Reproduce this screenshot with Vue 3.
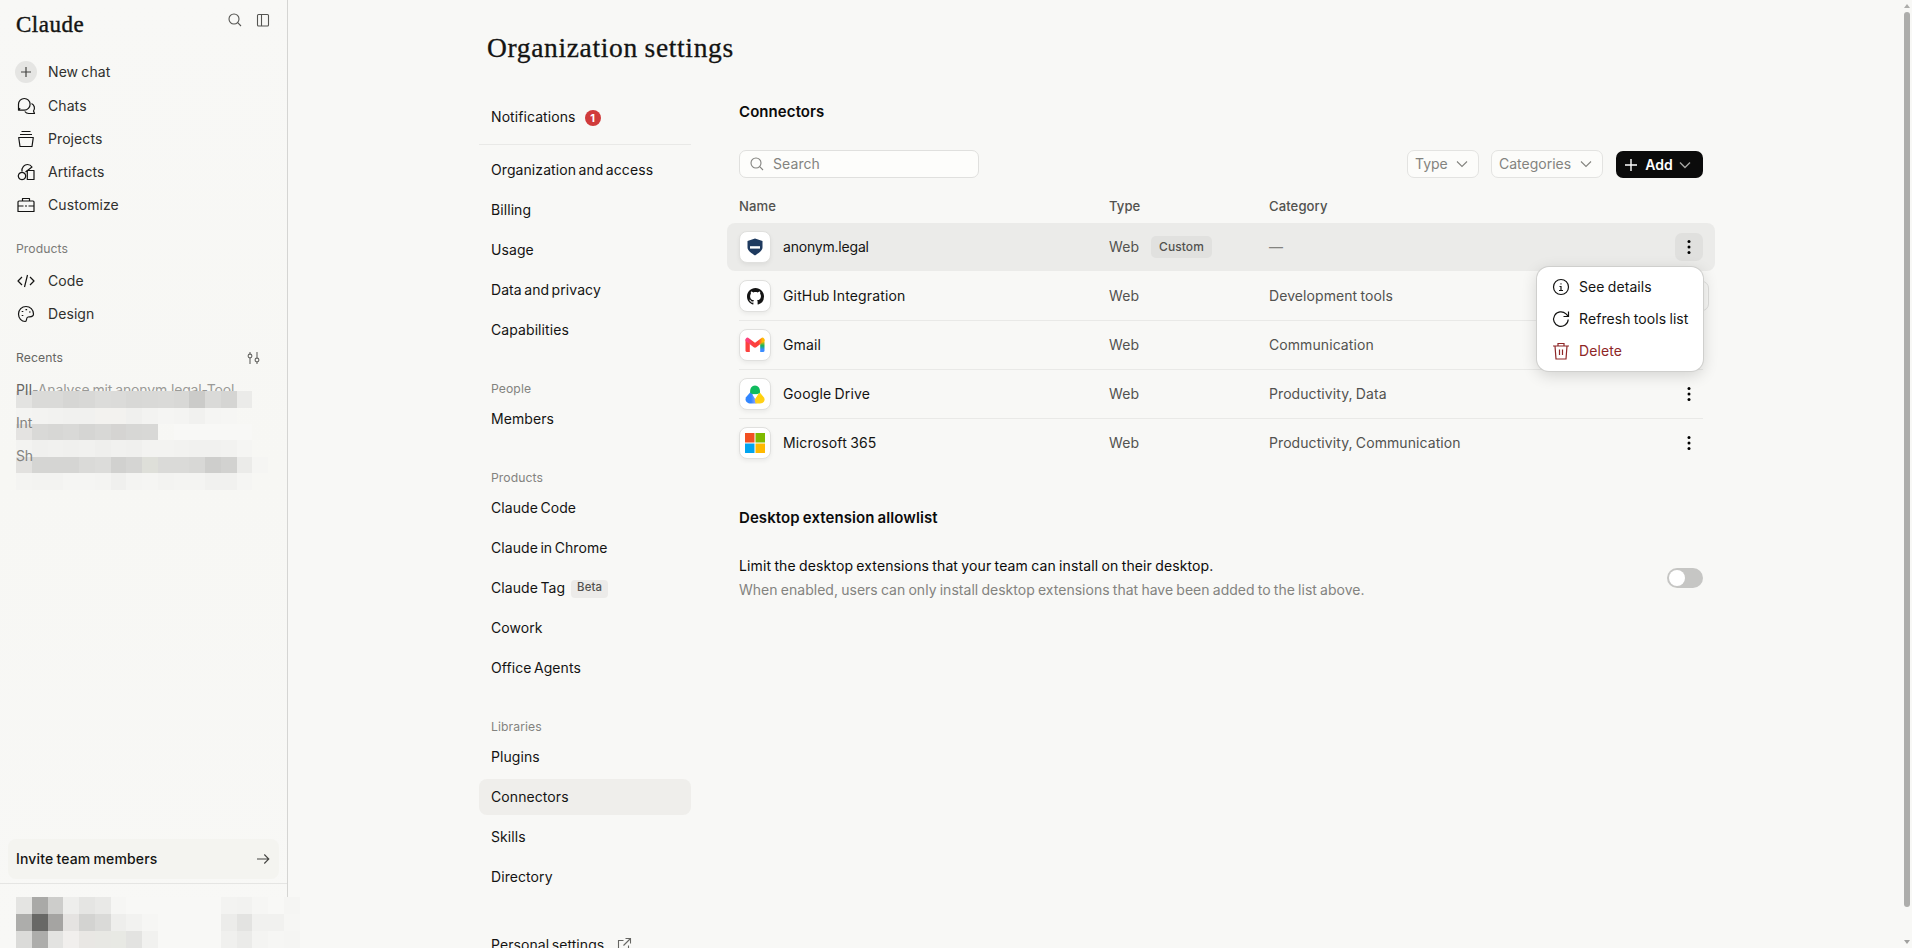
<template>
  <div class="app">
    <aside class="sidebar">
      <header class="sidebar-head">
        <span class="wordmark">Claude</span>
        <div class="head-actions">
          <svg class="ico" viewBox="0 0 16 16" width="16" height="16"><circle cx="7" cy="7" r="5" /><path d="M10.7 10.7L14 14" /></svg>
          <svg class="ico" viewBox="0 0 16 16" width="16" height="16"><rect x="2.5" y="2.5" width="11" height="11.5" rx="1" /><path d="M6.5 2.5v11.5" /></svg>
        </div>
      </header>

      <nav class="main-nav">
        <a class="nav-link first"><span class="nav-icon plus"><svg viewBox="0 0 20 20" width="20" height="20"><path d="M10 5v10M5 10h10" /></svg></span>New chat</a>
        <a v-for="item in mainLinks" :key="item.label" class="nav-link">
          <span class="nav-icon"><svg viewBox="0 0 20 20" width="20" height="20"><path v-for="d in item.paths" :key="d" :d="d" /></svg></span>{{ item.label }}
        </a>
      </nav>

      <h3 class="side-label">Products</h3>
      <nav>
        <a v-for="item in productLinks" :key="item.label" class="nav-link">
          <span class="nav-icon"><svg viewBox="0 0 20 20" width="20" height="20"><path v-for="d in item.paths" :key="d" :d="d" /></svg></span>{{ item.label }}
        </a>
      </nav>

      <div class="side-label recents-label">
        <span>Recents</span>
        <svg class="ico" viewBox="0 0 16 16" width="16" height="16"><path d="M5 2v2.2M5 8v6M12 2v6M12 12v2" /><circle cx="5" cy="6" r="1.9" /><circle cx="12" cy="10" r="1.9" /></svg>
      </div>
      <div class="recents">
        <div class="mosaic recents-mosaic">
          <template v-for="(row, r) in recentsMosaic" :key="r">
            <i v-for="(c, n) in row" :key="n" :style="{ background: c ? '#' + c : 'transparent' }"></i>
          </template>
        </div>
        <div v-for="item in recents" :key="item.head" class="recent" :class="{ strong: item.tail }">
          <span class="recent-head">{{ item.head }}</span><span class="recent-tail">{{ item.tail }}</span>
        </div>
      </div>

      <div class="invite">
        <span>Invite team members</span>
        <svg class="ico" viewBox="0 0 16 16" width="16" height="16"><path d="M2 8h11.5M9.3 3.5L13.8 8l-4.5 4.5" /></svg>
      </div>
      <footer class="account">
        <div class="mosaic account-mosaic">
          <template v-for="(row, r) in accountMosaic" :key="r">
            <i v-for="(c, n) in row" :key="n" :style="{ background: c ? '#' + c : 'transparent' }"></i>
          </template>
        </div>
      </footer>
    </aside>

    <main class="page">
      <h1 class="page-title">Organization settings</h1>
      <div class="columns">
        <nav class="settings-nav">
          <a class="set-link">Notifications <span class="count">1</span></a>
          <hr />
          <template v-for="group in settings" :key="group.key">
            <h4 v-if="group.title" class="set-label">{{ group.title }}</h4>
            <div class="set-group">
              <a v-for="link in group.links" :key="link" class="set-link" :class="{ active: link === active }">
                {{ link }} <span v-if="link === 'Claude Tag'" class="beta">Beta</span>
              </a>
            </div>
          </template>
          <a class="set-link personal">Personal settings
            <svg class="ico" viewBox="0 0 16 16" width="16" height="16"><path d="M7.5 3.5H2.500v10h10V8.500M9.500 1.500h5v5M14.500 1.500L7.500 8.500" /></svg>
          </a>
        </nav>

        <section class="content">
          <h2>Connectors</h2>
          <div class="toolbar">
            <div class="search">
              <svg class="ico" viewBox="0 0 16 16" width="16" height="16"><circle cx="7" cy="7" r="5" /><path d="M10.7 10.7L14 14" /></svg>
              <span>Search</span>
            </div>
            <button class="filter type">Type <svg class="ico" viewBox="0 0 16 16" width="16" height="16"><path d="M3 5.500l5 5 5-5" /></svg></button>
            <button class="filter cats">Categories <svg class="ico" viewBox="0 0 16 16" width="16" height="16"><path d="M3 5.500l5 5 5-5" /></svg></button>
            <button class="add">
              <svg class="add-plus" viewBox="0 0 16 16" width="16" height="16"><path d="M8 2v12M2 8h12" /></svg>
              <span>Add</span>
              <svg class="add-arrow" viewBox="0 0 16 16" width="16" height="16"><path d="M3 5.500l5 5 5-5" /></svg>
            </button>
          </div>

          <div class="table">
            <div class="row thead"><span>Name</span><span>Type</span><span>Category</span></div>
            <div v-for="(c, n) in connectors" :key="c.name" class="row" :class="{ hovered: n === 0 }">
              <div class="name">
                <span class="logo">
                  <svg v-if="c.logo === 'shield'" viewBox="0 0 16 18" width="16" height="18"><path fill="#1e3a5f" d="M8 0.500L15.500 3v6.500c0 3.200-4.500 6-7.500 8-3-2-7.500-4.800-7.500-8V3z" /><path fill="#fff" d="M3 8.200h10v2.400H3z" /></svg>
                  <svg v-else-if="c.logo === 'github'" viewBox="0 0 16 16" width="17" height="17"><path fill="#141414" d="M8 0C3.580 0 0 3.580 0 8c0 3.540 2.290 6.530 5.470 7.590.4.070.55-.17.55-.38 0-.19-.01-.82-.01-1.490-2.010.37-2.530-.49-2.690-.94-.09-.23-.48-.94-.82-1.130-.28-.15-.68-.52-.01-.53.63-.01 1.080.58 1.230.82.72 1.210 1.870.87 2.330.66.07-.52.28-.87.51-1.070-1.780-.2-3.640-.89-3.640-3.950 0-.87.31-1.590.82-2.150-.08-.2-.36-1.020.08-2.120 0 0 .67-.21 2.200.82.64-.18 1.320-.27 2-.27s1.360.09 2 .27c1.530-1.040 2.200-.82 2.200-.82.44 1.100.16 1.920.08 2.120.51.56.82 1.270.82 2.150 0 3.070-1.870 3.750-3.650 3.950.29.25.54.73.54 1.480 0 1.070-.01 1.930-.01 2.200 0 .21.15.46.55.38A8.010 8.010 0 0 0 16 8c0-4.420-3.580-8-8-8z" /></svg>
                  <svg v-else-if="c.logo === 'gmail'" viewBox="0 0 20 16" width="20" height="16">
                    <defs>
                      <linearGradient id="gmR" x1="0" y1="0" x2="0" y2="1"><stop offset="0.15" stop-color="#ffba00" /><stop offset="0.5" stop-color="#12b45b" /><stop offset="0.8" stop-color="#3b8cff" /></linearGradient>
                      <linearGradient id="gmM" x1="0" y1="0" x2="1" y2="0"><stop offset="0" stop-color="#fc3f7f" /><stop offset="0.35" stop-color="#fc413d" /><stop offset="0.75" stop-color="#fc413d" /><stop offset="1" stop-color="#ffba00" /></linearGradient>
                    </defs>
                    <path d="M15.200 4l4.300-1.500V13.500a1.500 1.500 0 0 1-1.500 1.500h-2.800z" fill="url(#gmR)" />
                    <path d="M0.500 2.500V13.500A1.500 1.500 0 0 0 2 15h2.800V4z" fill="#fc413d" />
                    <path d="M2.600 2.800l7.400 5.700 7.400-5.700" fill="none" stroke="url(#gmM)" stroke-width="4.200" stroke-linejoin="round" stroke-linecap="round" />
                  </svg>
                  <svg v-else-if="c.logo === 'drive'" viewBox="0 0 20 19" width="20" height="19">
                    <defs>
                      <linearGradient id="dvB" x1="0" y1="0" x2="1" y2="0"><stop offset="0.500" stop-color="#3186ff" /><stop offset="1" stop-color="#a0a8fb" /></linearGradient>
                      <linearGradient id="dvY" x1="0" y1="0" x2="0" y2="1"><stop offset="0" stop-color="#fbe21e" /><stop offset="0.400" stop-color="#ffcf0d" /><stop offset="1" stop-color="#ffd21c" /></linearGradient>
                    </defs>
                    <path fill="url(#dvB)" d="M6 6.500L10.300 13.500 11.500 18.500H5.500C2 18.500-0.500 15.500 1 12.200z" />
                    <path fill="url(#dvY)" d="M14.500 7L19.200 12.800C20.500 16 18.200 18.500 15 18.500H10.500L9.800 14.500z" />
                    <path fill="#10bb5e" d="M5.300 8C4.300 3.500 7 0.500 10 0.500S15.800 3.500 14.800 8C12 9.700 8 9.700 5.300 8z" />
                    <path fill="#fff" d="M7.400 9.400h5.300L10 13.800z" />
                  </svg>
                  <svg v-else viewBox="0 0 20 20" width="20" height="20"><path fill="#f25022" d="M0 0h9.500v9.500H0z" /><path fill="#7fba00" d="M10.500 0H20v9.500h-9.500z" /><path fill="#00a4ef" d="M0 10.500h9.500V20H0z" /><path fill="#ffb900" d="M10.500 10.500H20V20h-9.500z" /></svg>
                </span>
                {{ c.name }}
              </div>
              <div class="kind">Web <span v-if="n === 0" class="custom">Custom</span></div>
              <div class="category" :class="{ none: n === 0 }">{{ c.category }}</div>
              <div class="more">
                <span v-if="n === 1" class="connect"></span>
                <button v-else class="dots" :class="{ on: n === 0 }"><svg viewBox="0 0 4 16" width="4" height="16"><circle cx="2" cy="2.500" r="1.500" /><circle cx="2" cy="8" r="1.500" /><circle cx="2" cy="13.500" r="1.500" /></svg></button>
                <div v-if="n === 0" class="menu">
                  <a><svg viewBox="0 0 18 18" width="18" height="18"><circle cx="9" cy="9" r="7.500" /><path d="M7.500 8.500H9v4M7 12.500h4M8.500 5.800h1" /></svg>See details</a>
                  <a><svg viewBox="0 0 18 18" width="18" height="18"><path d="M16.200 9.500A7.300 7.300 0 1 1 14 3.900L16.500 6.500M16.500 1.500v5h-5" /></svg>Refresh tools list</a>
                  <a class="danger"><svg viewBox="0 0 18 18" width="18" height="18"><path d="M1 4h16M6 4V1.500h6V4M3 4l1 13h10l1-13M7.500 7.500v5.500M10.500 7.500v5.500" /></svg>Delete</a>
                </div>
              </div>
            </div>
          </div>

          <h2 class="allow-title">Desktop extension allowlist</h2>
          <div class="allow">
            <div>
              <p class="allow-main">Limit the desktop extensions that your team can install on their desktop.</p>
              <p class="allow-sub">When enabled, users can only install desktop extensions that have been added to the list above.</p>
            </div>
            <button class="switch"><span></span></button>
          </div>
        </section>
      </div>
    </main>

    <div class="scrollbar">
      <span class="arrow up"></span>
      <span class="thumb"></span>
      <span class="arrow down"></span>
    </div>
  </div>
</template>

<script setup>
import { ref } from "vue";

const active = ref("Connectors");

const mainLinks = [
  {
    label: "Chats",
    paths: [
      "M2.500 14.500V8.300a5.800 5.800 0 1 1 5.800 5.800H2.500l1.600-1.900",
      "M15.500 7.500a5 5 0 0 1 2 7.500l1 2.500h-5.500a5 5 0 0 1-4.200-2",
    ],
  },
  { label: "Projects", paths: ["M5.500 2.500h9M4 5.500h12", "M2.700 8.500h14.600l-1.300 9H4z"] },
  {
    label: "Artifacts",
    paths: [
      "M6 10.300a3.700 3.700 0 1 0 .01 0z",
      "M11.300 8.500h6.700v9h-6.700z",
      "M6 9.500C5.500 5 8.500 2.500 11.500 2.500c2 0 3.500 1 4.500 2.500L9.500 10",
    ],
  },
  {
    label: "Customize",
    paths: ["M3 6h14a1 1 0 0 1 1 1v9.500H2V7a1 1 0 0 1 1-1z", "M6.500 6V3.500h7V6", "M2 11h5.500M9 11h2M12.500 11H18"],
  },
];

const productLinks = [
  { label: "Code", paths: ["M6 6l-4 4 4 4M14 6l4 4-4 4M11.500 4l-3 12"] },
  {
    label: "Design",
    paths: [
      "M10 2.500c-4.200 0-7.500 3.300-7.500 7.500s3 7.500 6.700 7.500c2.300 0 .3-4 2.800-4.500 2-.4 5.500.5 5.500-3 0-4.200-3.300-7.500-7.500-7.500z",
      "M5.700 11.500h1.600M5.700 7.500h1.600M9.500 5.700h1.600M13 8h1.600",
    ],
  },
];

const recents = [
  { head: "PII", tail: "-Analyse mit anonym.legal-Tool" },
  { head: "Int", tail: "" },
  { head: "Sh", tail: "" },
];

const settings = [
  { key: "org", links: ["Organization and access", "Billing", "Usage", "Data and privacy", "Capabilities"] },
  { key: "people", title: "People", links: ["Members"] },
  { key: "products", title: "Products", links: ["Claude Code", "Claude in Chrome", "Claude Tag", "Cowork", "Office Agents"] },
  { key: "libs", title: "Libraries", links: ["Plugins", "Connectors", "Skills", "Directory"] },
];

const connectors = [
  { name: "anonym.legal", logo: "shield", category: "—" },
  { name: "GitHub Integration", logo: "github", category: "Development tools" },
  { name: "Gmail", logo: "gmail", category: "Communication" },
  { name: "Google Drive", logo: "drive", category: "Productivity, Data" },
  { name: "Microsoft 365", logo: "microsoft", category: "Productivity, Communication" },
];

// redacted chat titles, one hex colour per block
const recentsMosaic = [
  ["", "", "", "", "", "", "", "", "", "", "", "", "", "", "", ""],
  ["e3e3e1", "dadad8", "dadad8", "d6d6d4", "d8d8d6", "dcdcda", "dbdbd9", "d8d8d6", "d9d9d7", "dadad8", "d8d8d6", "cbcbc9", "dadad8", "d5d5d3", "ebebe9", ""],
  ["f4f4f2", "f3f3f1", "f2f2f0", "f1f1ef", "f1f1ef", "f3f2ef", "f3f2ef", "f0f0ee", "f3f3f1", "f5f5f3", "f4f4f2", "f1f1ef", "f5f5f3", "f6f6f4", "", ""],
  ["e4e3e1", "d9d9d7", "d7d7d5", "d9d9d7", "d5d5d3", "d8d8d6", "d5d4d2", "d7d7d5", "d8d8d6", "", "f8f8f6", "f8f8f6", "f8f8f6", "f8f8f6", "f8f8f6", ""],
  ["f3f3f1", "f0f0ee", "f1f1ef", "f0f0ee", "f1f1ef", "efefed", "f1f1ef", "f0f0ee", "f3f3f1", "f3f3f1", "f2f2f0", "f1f1ef", "f1f1ef", "f2f2f0", "f5f5f3", ""],
  ["e2e1df", "d5d5d3", "d5d5d3", "d5d5d3", "dadad8", "dcdcda", "d1d1cf", "d5d5d3", "dedfd9", "dadad8", "dadad8", "d8d8d6", "cececc", "d2d2d0", "ebebe9", "f5f5f3"],
  ["f4f4f2", "f3f3f1", "f3f3f1", "f5f5f3", "f5f5f3", "f4f4f2", "f0f0ee", "f4f4f2", "f5f5f3", "f3f3f1", "f4f4f2", "f4f4f2", "f1f1ef", "f1f1ef", "f5f5f3", ""],
];

const accountMosaic = [
  ["e4e4e2", "a9a9a7", "cdcdcb", "eeeeec", "e5e5e3", "e9e9e7", "f6f6f4", "", "", "", "", "", "", "f3f3f1", "f2f2f0", "f6f6f4", "", "f5f5f3"],
  ["adadab", "686866", "a5a4a2", "e5e3e1", "d3d3d1", "dadad8", "eeeeec", "f2f2f0", "f6f6f4", "", "", "", "", "ececea", "e3e3e1", "f1f1ef", "f1f1ef", "f6f6f4"],
  ["dbdbd9", "adadab", "e3e3e1", "f1efed", "e9e7e4", "e8e8e4", "e8e9e4", "e3e3e1", "f1f1ef", "", "", "", "", "f0f0ee", "ebebe9", "f4f4f2", "f6f6f4", "f5f5f3"],
];
</script>

<style>
body {
  background: #f8f8f6;
  overflow: hidden;
}
</style>

<style scoped>
* {
  box-sizing: border-box;
}

.app {
  display: flex;
  height: 948px;
  overflow: hidden;
  background: #f8f8f6;
  color: #141413;
  font-family: Inter, "Liberation Sans", sans-serif;
  font-size: 14px;
  line-height: 20px;
  letter-spacing: 0.08px;
  word-spacing: -0.8px;
}

h1, h2, h3, h4, p {
  margin: 0;
}

button {
  font: inherit;
  padding: 0;
  border: none;
}

svg {
  display: block;
  flex: none;
}

.ico {
  fill: none;
  stroke: currentColor;
  stroke-width: 1.1;
}

/* Sidebar */
.sidebar {
  width: 288px;
  flex: none;
  display: flex;
  flex-direction: column;
  border-right: 1px solid #d5d5d3;
  background: linear-gradient(#f8f8f6, #f7f7f4 50%, #f8f8f6);
}

.sidebar-head {
  height: 55px;
  padding: 12px 16px 0;
  display: flex;
  justify-content: space-between;
}

.wordmark {
  font-family: "Liberation Serif", serif;
  font-size: 23px;
  line-height: 25px;
  letter-spacing: 0.5px;
  -webkit-text-stroke: 0.4px #141413;
}

.head-actions {
  display: flex;
  gap: 12px;
  color: #555552;
}

.nav-link {
  display: flex;
  align-items: center;
  height: 33px;
  padding-left: 15px;
  gap: 11px;
  color: #30302e;
}

.nav-link.first {
  height: 34px;
}

.nav-icon {
  width: 22px;
  height: 22px;
  display: flex;
  align-items: center;
  justify-content: center;
  border-radius: 50%;
}

.nav-icon svg {
  fill: none;
  stroke: #141413;
  stroke-width: 1.2;
  stroke-linejoin: round;
}

.nav-icon.plus {
  background: #e5e5e3;
}

.nav-icon.plus svg {
  stroke: #444442;
}

.side-label {
  height: 20px;
  margin: 18px 16px 5px;
  font-size: 12.2px;
  font-weight: 400;
  color: #7b7b78;
}

.recents-label {
  display: flex;
  justify-content: space-between;
  align-items: center;
  margin: 18px 26px 5px 16px;
  color: #666663;
}

.recents {
  position: relative;
  padding: 0 16px;
}

.recent {
  height: 33px;
  display: flex;
  align-items: center;
  color: #83837f;
  white-space: nowrap;
  letter-spacing: -0.15px;
}

.recent.strong .recent-head {
  color: #666663;
}

.recent-head {
  position: relative;
  z-index: 2;
}

.recent-tail {
  color: #9a9a97;
}

.mosaic {
  display: grid;
}

.recents-mosaic {
  position: absolute;
  left: 16px;
  top: 2px;
  z-index: 1;
  grid-template-columns: repeat(16, 15.75px);
  grid-template-rows: 16px 17px 16px 16px 17px 16px 17px;
}

.invite {
  margin: auto 8px 4px;
  height: 40px;
  flex: none;
  padding: 0 8px;
  display: flex;
  align-items: center;
  justify-content: space-between;
  border-radius: 8px;
  background: #f4f4f0;
  font-weight: 500;
  letter-spacing: 0.15px;
}

.invite .ico {
  color: #444442;
}

.account {
  height: 65px;
  flex: none;
  border-top: 1px solid #e5e5e3;
}

.account-mosaic {
  position: relative;
  width: 284px;
  margin: 13px 0 0 16px;
  background: #f8f8f6;
  grid-template-columns: repeat(18, 15.78px);
  grid-template-rows: repeat(3, 17px);
}

/* Settings page */
.page {
  flex: 1;
  padding: 32px 0 0 191px;
  min-width: 0;
}

.page-title {
  height: 32px;
  padding-left: 8px;
  font-family: "Liberation Serif", serif;
  font-weight: 400;
  font-size: 27.5px;
  line-height: 32px;
  letter-spacing: 0.65px;
  -webkit-text-stroke: 0.3px #141413;
}

.columns {
  display: flex;
  gap: 48px;
  padding-top: 35px;
}

.settings-nav {
  width: 212px;
}

.set-link {
  display: flex;
  align-items: center;
  gap: 8px;
  height: 36px;
  padding: 0 12px;
  border-radius: 8px;
  word-spacing: -1.6px;
}

.set-link.active {
  background: #efeeeb;
}

.settings-nav hr {
  margin: 9px 0 7px;
  border: none;
  border-top: 1px solid #e9e9e7;
}

.set-group {
  display: flex;
  flex-direction: column;
  gap: 4px;
}

.set-label {
  height: 20px;
  margin: 31px 12px 2px;
  font-size: 12.2px;
  font-weight: 400;
  color: #83837f;
}

.count {
  width: 16px;
  height: 16px;
  margin: 1px 0 0 1px;
  border-radius: 50%;
  background: #d03b3b;
  color: #fff;
  font-size: 11px;
  font-weight: 700;
  line-height: 16px;
  text-align: center;
}

.beta {
  height: 18px;
  margin: 1px 0 0 -2px;
  padding: 0 6px;
  border-radius: 4px;
  background: #ecebe9;
  color: #52524f;
  font-size: 11.4px;
  font-weight: 500;
  line-height: 15px;
}

.personal {
  margin-top: 32px;
  gap: 12px;
}

.personal .ico {
  color: #666663;
}

.content {
  width: 964px;
  padding-top: 3px;
}

h2 {
  font-size: 15px;
  font-weight: 600;
  line-height: 20px;
  color: #0b0b0b;
}

.toolbar {
  display: flex;
  align-items: center;
  height: 28px;
  margin-top: 28px;
}

.search {
  width: 240px;
  height: 28px;
  margin-right: auto;
  padding-left: 9px;
  display: flex;
  align-items: center;
  gap: 8px;
  border: 1px solid #e0e0de;
  border-radius: 7px;
  background: #fdfdfb;
  color: #83837f;
}

.filter {
  height: 28px;
  margin-right: 12px;
  padding: 0 8px 0 7px;
  display: flex;
  align-items: center;
  justify-content: space-between;
  border: 1px solid #e3e3e1;
  border-radius: 7px;
  background: #fcfcfa;
  color: #83837f;
}

.type {
  width: 72px;
}

.cats {
  width: 112px;
  margin-right: 13px;
}

.add {
  width: 87px;
  height: 27px;
  margin-top: 1px;
  padding: 0 10px 0 7px;
  display: flex;
  align-items: center;
  justify-content: space-between;
  border-radius: 7px;
  background: #0b0b0b;
  color: #fff;
  font-weight: 600;
}

.add svg {
  fill: none;
  stroke: #fff;
  stroke-width: 1.4;
}

.add .add-arrow {
  stroke: #a5a5a2;
  margin-left: -2px;
}

.row {
  display: grid;
  grid-template-columns: 370px 160px 1fr 28px;
  align-items: center;
  height: 49px;
  border-bottom: 1px solid #e9e9e7;
  color: #52524f;
}

.row:last-child {
  border-color: transparent;
}

.thead {
  height: 45px;
  padding-top: 11px;
  border: none;
  font-size: 13.1px;
  font-weight: 500;
}

.hovered {
  height: 48px;
  margin: 0 -12px 1px;
  padding: 0 12px;
  border: none;
  border-radius: 8px;
  background: #ebebe9;
}

.name {
  display: flex;
  align-items: center;
  gap: 12px;
  color: #141413;
  letter-spacing: 0.15px;
}

.hovered .name {
  letter-spacing: -0.2px;
}

.logo {
  width: 32px;
  height: 32px;
  display: flex;
  align-items: center;
  justify-content: center;
  border: 1px solid #e0e0de;
  border-radius: 8px;
  background: #fff;
  box-shadow: 0 2px 4px rgba(0, 0, 0, 0.06);
}

.kind {
  display: flex;
  align-items: center;
  gap: 12px;
}

.custom {
  height: 22px;
  padding: 0 8px;
  border-radius: 5px;
  background: #e1e1df;
  font-size: 12px;
  font-weight: 500;
  line-height: 22px;
}

.category.none {
  color: #83837f;
}

.more {
  position: relative;
  height: 28px;
}

.dots {
  width: 28px;
  height: 28px;
  display: flex;
  align-items: center;
  justify-content: center;
  border-radius: 7px;
  background: transparent;
}

.dots.on {
  background: #e0e0de;
}

.connect {
  display: block;
  width: 34px;
  height: 30px;
  margin-top: -1px;
  border: 1px solid #dededc;
  border-radius: 7px;
}

.menu {
  position: absolute;
  right: 0;
  top: 34px;
  z-index: 10;
  width: 166px;
  height: 104px;
  padding: 4px;
  border-radius: 12px;
  background: #fff;
  box-shadow: 0 0 0 1px #cfcfcd, 0 4px 16px rgba(0, 0, 0, 0.16);
}

.menu a {
  display: flex;
  align-items: center;
  gap: 9px;
  height: 32px;
  padding-left: 11px;
  color: #141413;
  white-space: nowrap;
}

.menu svg {
  fill: none;
  stroke: currentColor;
  stroke-width: 1.2;
}

.menu .danger {
  color: #8e2627;
}

.allow-title {
  margin-top: 40px;
}

.allow {
  display: flex;
  justify-content: space-between;
  align-items: center;
  margin-top: 26px;
}

.allow p {
  line-height: 24px;
}

.allow-main {
  color: #0b0b0b;
  letter-spacing: 0.12px;
}

.allow-sub {
  color: #83837f;
  letter-spacing: 0.025px;
}

.switch {
  width: 36px;
  height: 20px;
  padding: 2px;
  border-radius: 10px;
  background: #c6c6c4;
}

.switch span {
  display: block;
  width: 16px;
  height: 16px;
  border-radius: 50%;
  background: #fff;
}

/* Scrollbar */
.scrollbar {
  width: 8px;
  flex: none;
  display: flex;
  flex-direction: column;
  align-items: center;
  padding: 4px 2px 4px 0;
}

.thumb {
  width: 6px;
  height: 895px;
  margin: 4px 0 auto;
  border-radius: 3px;
  background: #adadab;
}

.arrow {
  border: 3px solid transparent;
}

.arrow.up {
  border-top: none;
  border-bottom: 4px solid #adadab;
}

.arrow.down {
  border-bottom: none;
  border-top: 4px solid #a0a09e;
}
</style>
